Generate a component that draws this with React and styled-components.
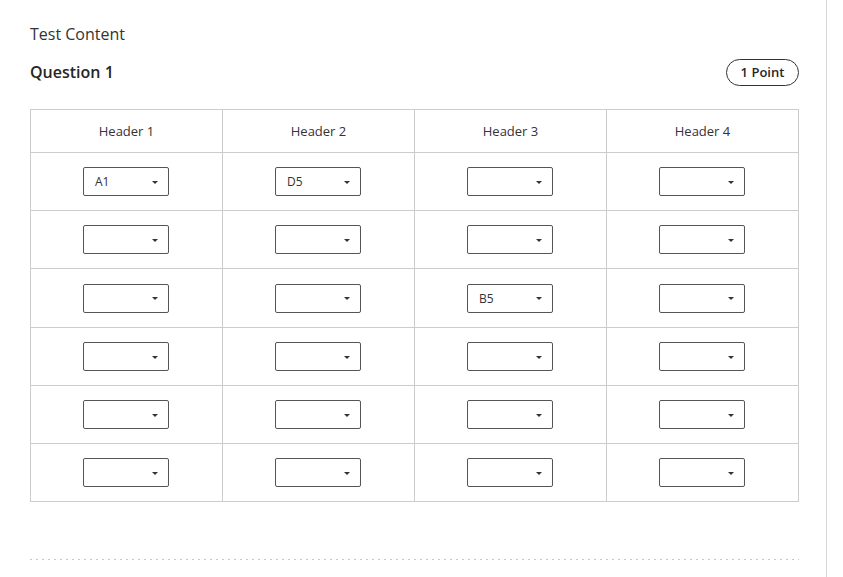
import React from "react";
import styled, { createGlobalStyle } from "styled-components";

const Global = createGlobalStyle`
  html, body { margin: 0; padding: 0; background: #fff; }
  body { font-family: "Open Sans", "Noto Sans", sans-serif; color: #333; }
  * { box-sizing: border-box; }
`;

const Page = styled.div`
  width: 827px;
  min-height: 577px;
  border-right: 1px solid #d6d6d6;
  padding: 23px 27px 0 30px;
`;

const Title = styled.div`
  font-size: 16px;
  line-height: 22px;
  color: #333;
`;

const QuestionRow = styled.div`
  display: flex;
  align-items: center;
  justify-content: space-between;
  margin-top: 13px;
  height: 28px;
`;

const Question = styled.h2`
  margin: 0;
  font-size: 16px;
  font-weight: 600;
  color: #262626;
`;

const Badge = styled.span`
  display: inline-flex;
  align-items: center;
  justify-content: center;
  height: 27px;
  width: 73px;
  border: 1px solid #333;
  border-radius: 14px;
  font-size: 13px;
  font-weight: 600;
  color: #262626;
`;

const Table = styled.div`
  margin-top: 23px;
  display: grid;
  grid-template-columns: repeat(4, 1fr);
  border-top: 1px solid #ccc;
  border-left: 1px solid #ccc;
`;

const HeadCell = styled.div`
  height: 43px;
  display: flex;
  align-items: center;
  justify-content: center;
  font-size: 13px;
  color: #333;
  border-right: 1px solid #ccc;
  border-bottom: 1px solid #ccc;
`;

const Cell = styled.div`
  height: ${(p) => p.$h}px;
  display: flex;
  align-items: center;
  justify-content: center;
  padding-right: 1px;
  border-right: 1px solid #ccc;
  border-bottom: 1px solid #ccc;
`;

const Select = styled.div`
  width: 86px;
  height: 29px;
  border: 1px solid #555;
  border-radius: 2px;
  display: flex;
  align-items: center;
  justify-content: space-between;
  padding: 0 10px 0 11px;
  font-size: 12px;
  color: #333;
  background: #fff;
`;

const Caret = styled.span`
  width: 0;
  height: 0;
  border-left: 3px solid transparent;
  border-right: 3px solid transparent;
  border-top: 3px solid #333;
  margin-top: 1px;
`;

const Divider = styled.div`
  margin-top: 57px;
  height: 1px;
  background: repeating-linear-gradient(
    to right,
    #c8c8c8 0 2px,
    transparent 2px 6px
  );
`;

const rows = [
  ["A1", "D5", "", ""],
  ["", "", "", ""],
  ["", "", "B5", ""],
  ["", "", "", ""],
  ["", "", "", ""],
  ["", "", "", ""],
];
const heights = [58, 58, 59, 58, 58, 58];

export default function App() {
  return (
    <>
      <Global />
      <Page>
        <Title>Test Content</Title>
        <QuestionRow>
          <Question>Question 1</Question>
          <Badge>1 Point</Badge>
        </QuestionRow>
        <Table>
          {["Header 1", "Header 2", "Header 3", "Header 4"].map((h) => (
            <HeadCell key={h}>{h}</HeadCell>
          ))}
          {rows.map((r, i) =>
            r.map((v, j) => (
              <Cell key={`${i}-${j}`} $h={heights[i]}>
                <Select>
                  <span>{v}</span>
                  <Caret />
                </Select>
              </Cell>
            ))
          )}
        </Table>
        <Divider />
      </Page>
    </>
  );
}
